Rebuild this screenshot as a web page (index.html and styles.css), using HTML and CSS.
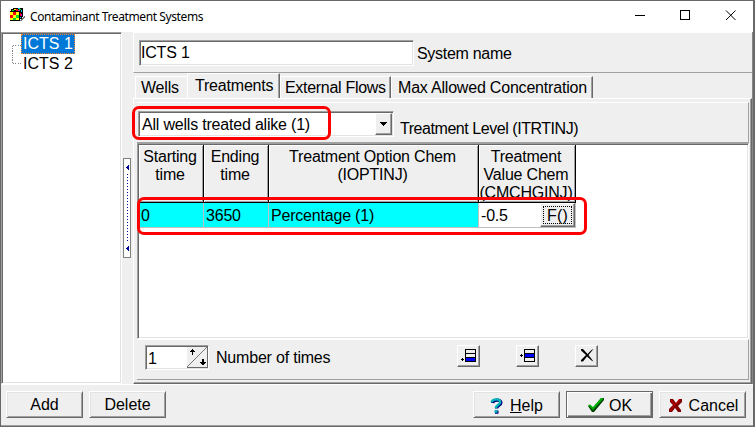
FILE: index.html
```html
<!DOCTYPE html>
<html lang="en">
<head>
<meta charset="utf-8">
<title>Contaminant Treatment Systems</title>
<link rel="stylesheet" href="styles.css">
</head>
<body>
<div class="window">
  <header class="titlebar">
    <svg class="app-icon" width="16" height="14" viewBox="0 0 16 14" shape-rendering="crispEdges"><path d="M3 0h10v9h-1v2h-2v2H0V3h1V1h2z"/><path fill="#ff0" d="M0 4h3v3H0zM6 4h3v3H6zM3 7h3v3H3zM0 10h3v2H0zM6 10h3v2H6zM4 1h2v1H4z"/><path fill="red" d="M3 4h3v3H3zM0 7h3v3H0zM6 1h2v2H6zM10 5h1v3h-1z"/><path fill="#0d2" d="M6 7h3v3H6zM3 10h3v2H3zM2 2h2v1H2zM9 1h2v1H9z"/><path fill="#0cf" d="M8 0h2v1H8zM10 9h1v1h-1zM11 2h1v2h-1z"/><path fill="#c0c" d="M8 2h2v1H8zM11 6h1v2h-1z"/><path fill="#777" d="M14 8h1v2h-1v1h-1v1h-1v1h-2v-1h1v-1h1v-1h1V9h1z"/></svg>
    <span class="title">Contaminant Treatment Systems</span>
    <svg class="sys" width="106" height="12" viewBox="0 0 106 12" fill="none" stroke="#000"><path d="M1 5.500h10M46.500.5h9v9h-9z" shape-rendering="crispEdges"/><path d="m92 .5 9.500 9.500m0-9.500L92 10"/></svg>
  </header>
  <main class="workspace">
    <nav class="tree sunken">
      <svg class="branches" width="10" height="22" viewBox="0 0 10 22" fill="none" stroke="#777" stroke-dasharray="1 1" shape-rendering="crispEdges"><path d="M10 .5H.5v20H10"/></svg>
      <div class="nodes"><span class="node selected">ICTS 1</span><span class="node">ICTS 2</span></div>
    </nav>
    <div class="splitter"><div class="grip">
      <svg width="3" height="5" shape-rendering="crispEdges"><path fill="#0000a0" d="M2 0h1v5H2V4H1V3H0V2h1V1h1z"/></svg><i></i><svg width="3" height="5" shape-rendering="crispEdges"><path fill="#0000a0" d="M2 0h1v5H2V4H1V3H0V2h1V1h1z"/></svg>
    </div></div>
    <section class="editor">
      <div class="name-row"><div class="name-field sunken">ICTS 1</div><span>System name</span></div>
      <div class="tabs">
        <span class="tab wells">Wells</span><span class="tab active">Treatments</span><span class="tab flows">External Flows</span><span class="tab conc">Max Allowed Concentration</span>
      </div>
      <div class="page">
        <div class="level">
          <div class="combo sunken"><span>All wells treated alike (1)</span><span class="drop raised"><svg width="7" height="4" shape-rendering="crispEdges"><path d="M0 0h7v1H6v1H5v1H4v1H3V3H2V2H1V1H0z"/></svg></span></div>
          <span class="level-label">Treatment Level (ITRTINJ)</span>
          <div class="mark mark-level"></div>
        </div>
        <div class="grid-box sunken">
          <div class="grid">
            <div class="head">Starting<br>time</div><div class="head">Ending<br>time</div><div class="head">Treatment Option Chem<br>(IOPTINJ)</div><div class="head">Treatment<br>Value Chem<br>(CMCHGINJ)</div>
            <div class="cell">0</div><div class="cell">3650</div><div class="cell">Percentage (1)</div><div class="cell value"><span>-0.5</span><button class="formula"><span>F()</span></button></div>
          </div>
          <div class="mark mark-row"></div>
        </div>
        <div class="times">
          <div class="spin sunken"><span>1</span><svg width="21" height="21" viewBox="0 0 21 21" shape-rendering="crispEdges"><path fill="#efefef" d="M0 0h21v21H0z"/><path stroke="#696969" d="M0 20.500h21M20.500 0v21"/><path d="M0 20 20 0" stroke="#777" shape-rendering="auto"/><path d="M5 2h1v1h1v1h1v1H6v3H5V5H3V4h1V3h1zM15 12h2v3h2v1h-1v1h-1v1h-2v-1h-1v-1h-1v-1h2z"/></svg></div>
          <span class="times-label">Number of times</span>
          <button class="tool raised"><svg width="16" height="15" viewBox="0 0 16 15" shape-rendering="crispEdges"><path d="M5 1h11v13H5zM2 10h1v1h1v1H3v1H2v-1H1v-1h1z"/><path fill="#efefef" d="M6 2h9v3H6zM6 6h9v3H6z"/><path fill="#00f" d="M6 10h9v3H6z"/></svg></button>
          <button class="tool raised"><svg width="16" height="15" viewBox="0 0 16 15" shape-rendering="crispEdges"><path d="M5 1h11v13H5zM2 6h1v1h1v1H3v1H2V8H1V7h1z"/><path fill="#efefef" d="M6 2h9v3H6zM6 10h9v3H6z"/><path fill="#00f" d="M6 6h9v3H6z"/></svg></button>
          <button class="tool raised"><svg width="16" height="15" viewBox="0 0 16 15"><path d="M3 1h2l4.500 5 4-4L15.500 1 10.500 7l5 6.500-2-1L9 8.500 5 13.500H3V12l5-5-5-4.500z"/></svg></button>
        </div>
      </div>
    </section>
  </main>
  <footer class="actions">
    <button class="push add">Add</button><button class="push delete">Delete</button>
    <button class="push glyph help"><svg width="13" height="17" viewBox="0 0 13 17" fill="none"><path stroke="#000080" stroke-width="3.200" d="M2.500 6C3 2.500 11 2 11 5.500c0 3-4.500 3-4.500 6M5 15.200h3.500"/><path stroke="#00b4b8" stroke-width="2.400" d="M1.500 5C3 1.500 10.200 1.500 10.200 5c0 3-4.500 3-4.500 6.200M4.500 14.500h3"/></svg><span><u>H</u>elp</span></button>
    <button class="push glyph ok"><svg width="17" height="15" viewBox="0 0 17 15"><path fill="#004000" d="M1 8 3 7l3 3L14 0h3v2L7 14H5z"/><path fill="#00b000" d="m1 7 2-.5L6 9l8-9h2v1L6 12z"/></svg><span>OK</span></button>
    <button class="push glyph cancel"><svg width="14" height="15" viewBox="0 0 14 15"><path fill="#800000" d="M1 1h3l3 4 3-4h3v3l-4 4 3 4v2H9L6 10l-3 4H0v-3l4-4-3-3z"/><path d="m2 2 4 5-5 6M7 6l4-5" fill="none" stroke="#d80000"/></svg><span>Cancel</span></button>
  </footer>
</div>
</body>
</html>
```
FILE: styles.css
```css
* { box-sizing: border-box; }
body { margin: 0; width: 755px; height: 427px; overflow: hidden; background: #696969; color: #000; font: 16px/18px "Liberation Sans", Arial, sans-serif; letter-spacing: -.2px; }
button { font: inherit; letter-spacing: inherit; color: inherit; padding: 0; margin: 0; border-radius: 0; background: #efefef; }
svg { display: block; flex: none; }
.window { width: 755px; height: 427px; border: 1px solid #696969; border-right: 2px solid #696969; background: #efefef; display: grid; grid-template-rows: 31px 352px 42px; }
.titlebar { background: #fff; display: flex; align-items: flex-start; padding: 7px 0 0 9px; }
.title { font: 12px/17px "Noto Sans", "Open Sans", sans-serif; letter-spacing: -.4px; margin-left: 4px; width: 241px; white-space: nowrap; }
.sys { margin: 2px 0 0 363px; }
.sunken { border: 1px solid; border-color: #a0a0a0 #fff #fff #a0a0a0; box-shadow: inset 1px 1px #696969, inset -1px -1px #e3e3e3; background: #fff; }
.raised { border: 1px solid; border-color: #fff #696969 #696969 #fff; box-shadow: inset -1px -1px #a0a0a0; background: #efefef; }
.workspace { display: grid; grid-template-columns: 121px 11px 620px; min-height: 0; }
.tree { display: flex; padding: 1px 0 0 10px; letter-spacing: 0; }
.branches { margin-top: 10px; width: 9px; }
.nodes { display: flex; flex-direction: column; align-items: flex-start; }
.node { height: 20px; line-height: 20px; padding: 0 2px; }
.selected { background: #0078d7; color: #fff; outline: 1px dotted #ff8728; outline-offset: -1px; }
.splitter { padding: 126px 0 0 1px; }
.grip { width: 8px; height: 100px; border: 1px solid #808080; background: #fff; display: flex; flex-direction: column; align-items: flex-start; justify-content: space-between; padding: 6px 0 6px 2px; }
.grip i { width: 1px; flex: 1; margin: 4px 0 4px 1px; background: repeating-linear-gradient(#0000a0 0 1px, transparent 1px 3px); }
.editor { display: grid; grid-template-rows: 41px 25px 286px; border-right: 1px solid #888; }
.name-row { display: flex; gap: 3px; padding: 7px 0 0 5px; border-top: 1px solid #fff; border-bottom: 1px solid #a0a0a0; border-left: 1px solid #fff; line-height: 28px; }
.name-row > span { letter-spacing: -.3px; }
.name-field { width: 275px; height: 26px; padding-left: 1px; line-height: 23px; }
.tabs { display: flex; align-items: flex-end; padding-left: 2px; line-height: 22px; }
.tab { height: 22px; border-top: 1px solid #fff; border-left: 1px solid #fff; border-right: 1px solid #696969; white-space: nowrap; box-shadow: inset -1px 0 #a0a0a0; }
.wells { width: 52px; padding-left: 5px; border-right: 0; box-shadow: none; }
.active { width: 93px; height: 25px; line-height: 23px; padding-left: 7px; }
.flows { width: 111px; padding-left: 4px; letter-spacing: -.3px; }
.conc { width: 202px; padding-left: 6px; }
.page { border: 1px solid; border-color: #fff #696969 #696969 #fff; box-shadow: inset -1px -1px #a0a0a0; padding: 3px 2px 3px 3px; display: grid; grid-template-rows: 41px 196px 1fr; }
.level { position: relative; display: flex; border-top: 1px solid #fff; border-right: 1px solid #a0a0a0; border-bottom: 1px solid #a0a0a0; padding: 8px 0 0 1px; }
.combo { width: 256px; height: 26px; display: flex; justify-content: space-between; line-height: 24px; padding: 1px 1px 1px 3px; }
.drop { width: 17px; height: 22px; display: grid; place-items: center; }
.level-label { margin: 9px 0 0 6px; letter-spacing: -.45px; }
.mark { position: absolute; border: 3px solid #f00; border-radius: 7px; pointer-events: none; }
.mark-level { left: -5px; top: 3px; width: 199px; height: 34px; }
.grid-box { position: relative; padding: 1px; }
.grid { display: grid; grid-template-columns: 65px 65px 210px 97px; grid-template-rows: 58px 25px; width: 437px; }
.head { background: #efefef; border-right: 1px solid #000; border-bottom: 1px solid #000; text-align: center; padding: 3px 2px 0 0; overflow: hidden; box-shadow: inset 1px 1px #fff, inset -1px -1px #a0a0a0; white-space: nowrap; }
.cell { background: #0ff; border-right: 1px solid #c0c0c0; border-bottom: 1px solid #c0c0c0; padding-left: 2px; line-height: 25px; }
.value { background: #fff; display: flex; justify-content: space-between; }
.formula { width: 35px; height: 24px; border: 1px solid; border-color: #fff #696969 #696969 #fff; box-shadow: inset -1px -1px #a0a0a0; display: grid; place-items: center; }
.formula span { border: 1px dotted #000; width: 29px; height: 18px; line-height: 17px; letter-spacing: .2px; }
.mark-row { left: -1px; top: 53px; width: 450px; height: 38px; }
.times { display: flex; align-items: flex-start; border-top: 1px solid #fff; border-right: 1px solid #a0a0a0; border-bottom: 1px solid #a0a0a0; padding: 5px 0 0 8px; }
.spin { width: 64px; height: 25px; display: flex; justify-content: space-between; padding: 1px 0 0 2px; line-height: 23px; }
.times-label { width: 241px; margin: 4px 0 0 7px; }
.tool { width: 23px; height: 22px; padding: 2px 0 0 2px; display: grid; place-items: start; margin-right: 36px; }
.actions { border-top: 1px solid #fff; display: flex; padding: 6px 0 0 5px; border-bottom: 1px solid #a0a0a0; }
.push { height: 27px; border: 1px solid; border-color: #fff #696969 #696969 #fff; box-shadow: inset 1px 1px #e3e3e3, inset -1px -1px #a0a0a0; display: flex; align-items: center; justify-content: center; letter-spacing: 0; }
.glyph { padding-top: 2px; }
.add { width: 77px; }
.delete { width: 77px; margin-left: 6px; }
.help { width: 87px; margin-left: 307px; gap: 7px; }
.ok { width: 87px; margin-left: 6px; gap: 5px; border-color: #696969; box-shadow: inset 1px 1px #fff, inset -1px -1px #696969, inset -2px -2px #a0a0a0; }
.cancel { width: 87px; margin-left: 6px; padding-left: 2px; gap: 6px; }
```
